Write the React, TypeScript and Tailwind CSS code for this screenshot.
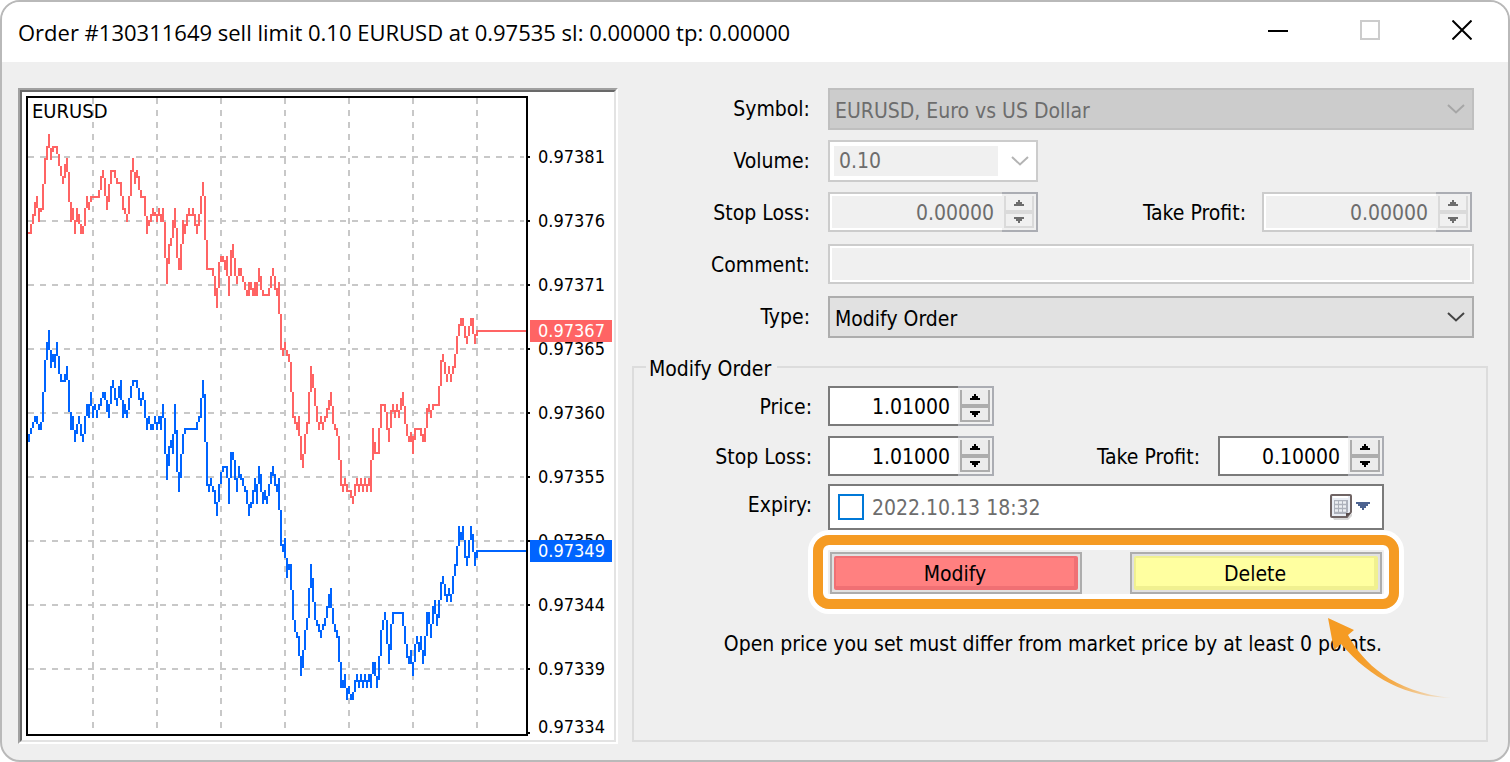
import { useState } from "react";
import type { ReactNode } from "react";
import clsx from "clsx";

// "top-bottom" of each tick column, one column per chart cell (a cell is 2px)
const ASK_COLUMNS = `
116-117 112-117 107-112 101-108 98-104 104-111 104-106 92-105 79-92 73-80
67-74 74-80 73-76 73-74 73-77 77-83 83-88 88-92 82-89 79-86
86-101 101-111 104-110 110-117 104-111 107-112 112-117 113-117 104-113 98-104
101-105 98-101 98-99 98-99 98-99 95-99 88-95 85-89 89-98 98-105
92-101 85-92 85-86 85-89 89-92 91-92 91-98 98-105 104-107 107-111
98-107 85-98 79-86 86-92 85-89 88-95 95-99 98-99 98-108 108-117
110-113 107-111 104-108 106-108 107-111 104-108 107-111 104-111 111-129 129-142
122-132 119-123 110-119 104-114 114-129 129-135 122-135 110-122 112-117 107-113
104-108 107-108 104-108 107-113 112-117 107-113 98-107 91-98 98-120 120-135
134-135 134-135 134-138 138-148 144-154 131-144 128-131 128-131 130-135 128-138
138-148 125-138 122-129 129-138 138-142 134-138 134-138 138-141 141-145 145-148
141-148 141-145 144-148 141-148 141-148 134-141 138-145 145-148 147-148 147-148
144-148 138-144 134-138 138-145 144-148 141-157 157-175 174-178 171-175 175-178
177-181 181-196 196-209 208-212 211-215 208-218 218-230 227-234 217-227 211-217
196-212 183-196 187-194 194-203 203-211 211-215 208-212 211-215 208-211 204-209
200-205 196-203 203-212 212-215 214-218 218-230 230-243 242-246 239-243 242-246
245-246 245-249 248-252 242-248 239-243 242-246 239-243 242-246 239-243 242-246
239-243 230-246 214-230 221-227 226-227 214-227 202-214 202-203 202-206 206-215
214-221 205-214 202-206 205-209 202-206 205-209 199-205 196-203 203-212 212-218
218-221 216-221 218-227 214-220 214-215 214-215 214-218 217-221 214-221 204-214
202-206 205-209 202-205 202-203 202-203 193-203 180-193 177-181 181-187 187-191
183-187 187-191 183-187 177-184 168-177 162-168 159-163 159-163 163-169 168-172
163-168 159-163 159-167 167-172 165-168`;

const BID_COLUMNS = `
217-221 214-217 211-214 208-211 208-212 212-215 211-215 196-211 180-196 171-180
165-175 175-184 177-181 177-184 171-178 178-187 187-191 190-191 187-191 183-190
190-206 206-215 208-215 215-221 212-217 208-212 212-218 217-221 208-217 202-208
202-209 196-203 203-209 202-205 205-209 202-205 199-203 196-199 196-200 200-206
202-209 193-202 190-194 194-200 199-203 193-199 190-200 200-209 202-207 205-209
199-205 193-199 190-193 190-191 190-194 194-200 199-203 196-200 200-209 209-215
208-212 212-215 212-215 208-212 211-215 208-212 208-215 202-209 209-227 227-240
223-233 220-224 217-227 202-217 215-236 236-246 227-239 217-227 214-217 214-215
214-215 214-215 214-215 214-215 211-215 208-211 199-209 190-199 197-221 221-243
242-246 239-243 243-246 245-252 251-258 242-251 236-242 233-236 233-234 233-239
239-252 226-239 226-230 230-240 239-246 233-239 237-240 239-243 243-246 245-252
252-258 251-254 245-252 239-246 242-252 233-242 237-246 246-252 245-250 248-252
242-248 236-242 233-238 237-243 242-246 239-255 255-273 272-276 269-279 279-289
282-285 282-295 295-310 310-316 316-319 318-328 328-338 325-334 315-325 309-315
294-309 282-294 289-301 301-310 310-313 312-316 315-319 312-315 309-313 303-309
297-304 294-304 304-312 312-316 315-319 318-331 331-344 340-344 337-344 344-350
343-347 347-350 346-350 340-346 337-341 340-344 337-341 340-344 337-341 340-344
337-341 337-344 331-337 331-338 338-344 328-340 315-328 310-315 306-310 310-322
322-332 312-325 306-312 306-307 306-307 306-307 306-307 306-313 313-322 322-329
328-332 325-332 331-338 322-331 318-322 321-326 318-325 325-332 318-328 306-318
306-312 312-319 303-312 300-307 307-313 300-309 291-300 288-292 292-298 297-301
294-298 297-301 288-297 282-288 273-283 263-273 266-270 263-270 270-279 278-283
270-279 263-270 267-276 276-283 275-279`;

const toPath = (columns: string) =>
  columns
    .trim()
    .split(/\s+/)
    .map((column, i) => {
      const [top, bottom] = column.split("-");
      return `M${14 + i} ${top}h1V${bottom}h-1z`;
    })
    .join("");

const askPath = toPath(ASK_COLUMNS);
const bidPath = toPath(BID_COLUMNS);

const verticalLines = [93, 157, 221, 285, 349, 413, 477];

const priceLevels = [
  { y: 157, label: "0.97381" },
  { y: 221, label: "0.97376" },
  { y: 285, label: "0.97371" },
  { y: 349, label: "0.97365" },
  { y: 413, label: "0.97360" },
  { y: 477, label: "0.97355" },
  { y: 541, label: "0.97350" },
  { y: 605, label: "0.97344" },
  { y: 669, label: "0.97339" },
];

const TickChart = () => (
  <div className="shrink-0 self-start border-2 border-t-[#a0a0a0] border-l-[#a0a0a0] border-r-white border-b-white">
    <div className="border-2 border-t-[#696969] border-l-[#696969] border-r-[#e3e3e3] border-b-[#e3e3e3] bg-white">
      <svg
        width="592"
        height="648"
        viewBox="22 92 592 648"
        role="img"
        aria-label="EURUSD tick chart"
        className="block text-[18px]"
      >
        <g
          shapeRendering="crispEdges"
          stroke="#c8c8c8"
          strokeWidth="2"
          strokeDasharray="6 6"
        >
          {verticalLines.map((x) => (
            <path key={x} d={`M${x} 98V728`} />
          ))}
          {priceLevels.map(({ y }) => (
            <path key={y} d={`M28 ${y}H524`} />
          ))}
        </g>
        <g shapeRendering="crispEdges">
          <path transform="scale(2)" d={askPath} fill="#ff6464" />
          <path transform="scale(2)" d={bidPath} fill="#0064ff" />
          <path d="M476 331H526" stroke="#ff6464" strokeWidth="2" />
          <path d="M476 551H526" stroke="#0064ff" strokeWidth="2" />
          <rect
            x="27"
            y="97"
            width="500"
            height="638"
            fill="none"
            stroke="#000"
            strokeWidth="2"
          />
          {priceLevels.map(({ y }) => (
            <path key={y} d={`M528 ${y}h2`} stroke="#000" strokeWidth="2" />
          ))}
          <path d="M528 733h2" stroke="#000" strokeWidth="2" />
        </g>
        <text x="32" y="118" className="text-[20px]">
          EURUSD
        </text>
        {priceLevels.map(({ y, label }) => (
          <text key={y} x="538" y={y + 6}>
            {label}
          </text>
        ))}
        <text x="538" y="733">
          0.97334
        </text>
        <rect x="530" y="320" width="82" height="22" fill="#ff6464" />
        <text x="538" y="337" fill="#fff">
          0.97367
        </text>
        <rect x="530" y="540" width="82" height="22" fill="#0064ff" />
        <text x="538" y="557" fill="#fff">
          0.97349
        </text>
      </svg>
    </div>
  </div>
);

const Chevron = ({ className }: { className?: string }) => (
  <svg
    width="18"
    height="10"
    viewBox="0 0 18 10"
    fill="none"
    stroke="currentColor"
    strokeWidth="2"
    className={className}
    aria-hidden="true"
  >
    <path d="M1 1l8 7.5L17 1" />
  </svg>
);

const SelectBox = ({
  id,
  options,
  disabled,
}: {
  id: string;
  options: string[];
  disabled?: boolean;
}) => (
  <div className="relative">
    <select
      id={id}
      disabled={disabled}
      className={clsx(
        "block h-[42px] w-full appearance-none border-2 pl-[5px] pr-10 pt-[3px] opacity-100",
        disabled
          ? "border-[#bfbfbf] bg-[#cccccc] text-[#6d6d6d]"
          : "border-[#adadad] bg-[#e1e1e1] text-black"
      )}
    >
      {options.map((option) => (
        <option key={option}>{option}</option>
      ))}
    </select>
    <Chevron
      className={clsx(
        "pointer-events-none absolute right-[9px] top-4",
        disabled ? "text-[#a6a6a6]" : "text-[#444444]"
      )}
    />
  </div>
);

const SpinButton = ({
  direction,
  disabled,
  onClick,
}: {
  direction: "up" | "down";
  disabled?: boolean;
  onClick: () => void;
}) => (
  <button
    type="button"
    aria-label={direction === "up" ? "Increase" : "Decrease"}
    disabled={disabled}
    onClick={onClick}
    className={clsx(
      "flex h-4 items-center justify-center border-2",
      direction === "up" && "border-t-0",
      disabled ? "border-[#dadada] bg-[#f0f0f0]" : "border-[#adadad] bg-[#ececec]"
    )}
  >
    <svg
      width="10"
      height="6"
      viewBox="0 0 10 6"
      fill={disabled ? "#6d6d6d" : "#000"}
      shapeRendering="crispEdges"
    >
      {direction === "up" ? (
        <path d="M4 0h2v2h2v2h2v2H0V4h2V2h2z" />
      ) : (
        <path d="M0 0h10v2H8v2H6v2H4V4H2V2H0z" />
      )}
    </svg>
  </button>
);

const SpinBox = ({
  id,
  initial,
  disabled,
}: {
  id: string;
  initial: string;
  disabled?: boolean;
}) => {
  const [value, setValue] = useState(initial);
  const step = (delta: number) =>
    setValue((Number(value) + delta).toFixed(5));

  return (
    <div className={clsx("flex h-10", disabled ? "w-[210px]" : "w-[166px]")}>
      <div
        className={clsx(
          "min-w-0 flex-1 border-2 border-r-0 bg-white",
          disabled ? "border-[#cccccc] py-[2px] pl-[2px]" : "border-[#7a7a7a]"
        )}
      >
        <input
          id={id}
          type="text"
          value={value}
          disabled={disabled}
          onChange={(e) => setValue(e.target.value)}
          className={clsx(
            "block h-full w-full pr-2 pt-[2px] text-right",
            disabled ? "bg-[#f0f0f0] text-[#6d6d6d]" : "bg-white text-black"
          )}
        />
      </div>
      <div className="flex w-9 flex-col border-2 border-l-0 border-[#abadb3] bg-[#f0f0f0] px-[2px] pt-[2px]">
        <SpinButton
          direction="up"
          disabled={disabled}
          onClick={() => step(0.00001)}
        />
        <SpinButton
          direction="down"
          disabled={disabled}
          onClick={() => step(-0.00001)}
        />
      </div>
    </div>
  );
};

const FieldLabel = ({
  htmlFor,
  children,
}: {
  htmlFor: string;
  children: ReactNode;
}) => (
  <label
    htmlFor={htmlFor}
    className="flex h-[42px] items-center justify-end whitespace-nowrap"
  >
    {children}
  </label>
);

const CalendarIcon = () => (
  <svg width="42" height="28" viewBox="0 0 42 28" aria-hidden="true">
    <path d="M3 25h14l5-5v3l-4 4H4z" fill="#d6d6d6" />
    <path
      d="M1 3a1 1 0 0 1 1-1h18a1 1 0 0 1 1 1v16l-4 5H2a1 1 0 0 1-1-1z"
      fill="#e9edf4"
      stroke="#6f6464"
      strokeWidth="2"
    />
    <path d="M3 3h15v2H3z" fill="#fff" />
    <path d="M4 7h14v12l-2 2H4z" fill="#adb1bb" />
    <path
      d="M5 9.500h3M9 9.500h3M13 9.500h3M5 13.500h3M9 13.500h3M13 13.500h3M5 17.500h3M9 17.500h3M13 17.500h3"
      stroke="#eceef2"
      strokeWidth="2.500"
    />
    <path d="M16 24v-4h5z" fill="#584c4c" />
    <path
      d="M26 9h14v2h-2v2h-2v2h-2v2h-2v-2h-2v-2h-2v-2h-2z"
      fill="#4d6390"
      shapeRendering="crispEdges"
    />
  </svg>
);

const TitleBar = () => (
  <header className="flex h-[60px] items-center bg-white pl-4">
    <h1 className="flex-1 truncate font-['Open_Sans',sans-serif] text-[22px]">
      Order #130311649 sell limit 0.10 EURUSD at 0.97535 sl: 0.00000 tp: 0.00000
    </h1>
    <button
      type="button"
      aria-label="Minimize"
      className="flex h-full w-[92px] items-center justify-center"
    >
      <svg width="20" height="20" viewBox="0 0 20 20" stroke="#000">
        <path d="M0 9h20" strokeWidth="2" />
      </svg>
    </button>
    <button
      type="button"
      aria-label="Maximize"
      disabled
      className="flex h-full w-[92px] items-center justify-center pb-[4px]"
    >
      <svg width="20" height="20" viewBox="0 0 20 20" fill="none">
        <path d="M1 1h18v18H1z" stroke="#cccccc" strokeWidth="2" />
      </svg>
    </button>
    <button
      type="button"
      aria-label="Close"
      className="flex h-full w-[92px] items-center justify-center pb-[4px]"
    >
      <svg width="20" height="20" viewBox="0 0 20 20" stroke="#000">
        <path d="M.5 .5l19 19M19.500 .5L.5 19.500" strokeWidth="2" />
      </svg>
    </button>
  </header>
);

const OrderFields = () => (
  <div className="grid grid-cols-[178px_1fr] gap-x-[18px] gap-y-[10px] pr-[14px]">
    <FieldLabel htmlFor="symbol">Symbol:</FieldLabel>
    <SelectBox id="symbol" options={["EURUSD, Euro vs US Dollar"]} disabled />

    <FieldLabel htmlFor="volume">Volume:</FieldLabel>
    <div className="flex h-[42px] w-[210px] items-center border-2 border-[#cccccc] bg-white p-1">
      <input
        id="volume"
        type="text"
        defaultValue="0.10"
        disabled
        className="h-full w-[164px] bg-[#f0f0f0] pl-[5px] text-[#6d6d6d]"
      />
      <button
        type="button"
        aria-label="Volume list"
        disabled
        className="flex flex-1 justify-end pr-[3px]"
      >
        <Chevron className="text-[#b4b4b4]" />
      </button>
    </div>

    <FieldLabel htmlFor="stop-loss">Stop Loss:</FieldLabel>
    <div className="flex h-[42px] justify-between pr-[2px]">
      <SpinBox id="stop-loss" initial="0.00000" disabled />
      <div className="flex gap-4">
        <FieldLabel htmlFor="take-profit">Take Profit:</FieldLabel>
        <SpinBox id="take-profit" initial="0.00000" disabled />
      </div>
    </div>

    <FieldLabel htmlFor="comment">Comment:</FieldLabel>
    <div className="h-[42px]">
      <div className="h-10 border-2 border-[#cccccc] bg-white p-[2px]">
        <input
          id="comment"
          type="text"
          disabled
          className="block h-full w-full bg-[#f0f0f0] px-1"
        />
      </div>
    </div>

    <FieldLabel htmlFor="type">Type:</FieldLabel>
    <SelectBox id="type" options={["Modify Order"]} />
  </div>
);

const Pointer = () => (
  <svg
    width="130"
    height="104"
    viewBox="0 0 130 104"
    className="pointer-events-none absolute -right-[68px] top-full"
    aria-hidden="true"
  >
    <defs>
      <linearGradient
        id="pointer-fade"
        gradientUnits="userSpaceOnUse"
        x1="30"
        y1="55"
        x2="122"
        y2="98"
      >
        <stop offset="0" stopColor="#f59b23" />
        <stop offset="0.45" stopColor="#f59b23" stopOpacity="0.8" />
        <stop offset="1" stopColor="#f59b23" stopOpacity="0.1" />
      </linearGradient>
    </defs>
    <path
      d="M1 19L27 31L21 36C36 64 66 93 124 99C80 98 44 80 14 45L7 51Z"
      fill="url(#pointer-fade)"
    />
  </svg>
);

const ModifyOrder = () => (
  <fieldset className="mt-[15px] flex-1 border-2 border-[#dcdcdc] pl-3 pr-[102px]">
    <legend className="h-7 pl-[3px] pr-[6px] leading-8">Modify Order</legend>
    <div className="grid grid-cols-[166px_1fr] gap-x-4 pt-[5px]">
      <FieldLabel htmlFor="modify-price">Price:</FieldLabel>
      <div className="pb-[10px]">
        <SpinBox id="modify-price" initial="1.01000" />
      </div>

      <FieldLabel htmlFor="modify-stop-loss">Stop Loss:</FieldLabel>
      <div className="flex h-12 justify-between">
        <SpinBox id="modify-stop-loss" initial="1.01000" />
        <div className="flex gap-[18px]">
          <FieldLabel htmlFor="modify-take-profit">Take Profit:</FieldLabel>
          <SpinBox id="modify-take-profit" initial="0.10000" />
        </div>
      </div>

      <FieldLabel htmlFor="expiry">Expiry:</FieldLabel>
      <div className="flex h-[46px] items-center gap-2 border-2 border-[#7a7a7a] bg-white pl-2 pr-[10px]">
        <input
          type="checkbox"
          aria-label="Use expiry"
          className="size-[26px] shrink-0 appearance-none border-2 border-[#0078d7] bg-white checked:bg-[#0078d7]"
        />
        <input
          id="expiry"
          type="text"
          defaultValue="2022.10.13 18:32"
          className="min-w-0 flex-1 pt-[2px] text-[#6d6d6d]"
        />
        <button type="button" aria-label="Open calendar">
          <CalendarIcon />
        </button>
      </div>

      <div className="relative col-start-2 -mx-[15px] mt-[5px] flex gap-12 rounded-[16px] border-[10px] border-[#f59b23] px-[7px] pb-[5px] pt-[7px] shadow-[0_0_0_5px_#fff,inset_0_0_0_5px_#fff]">
        <button
          type="button"
          className="h-[42px] flex-1 border-2 border-[#adadad] bg-[#e1e1e1] p-[2px]"
        >
          <span className="flex h-full items-center justify-center rounded-[2px] border-b-4 border-l-2 border-r-4 border-t-2 border-[#f07074] bg-[#ff8080] pt-[3px]">
            Modify
          </span>
        </button>
        <button
          type="button"
          className="h-[42px] flex-1 border-2 border-[#adadad] bg-[#e1e1e1] p-[2px]"
        >
          <span className="flex h-full items-center justify-center rounded-[2px] border-b-4 border-l-2 border-r-4 border-t-2 border-[#f0f090] bg-[#ffffa0] pt-[3px]">
            Delete
          </span>
        </button>
        <Pointer />
      </div>
    </div>
    <p className="mt-[21px] whitespace-nowrap pr-[2px] text-right leading-7">
      Open price you set must differ from market price by at least 0 points.
    </p>
  </fieldset>
);

export default function App() {
  return (
    <div className="flex min-h-screen flex-col overflow-hidden rounded-[20px] border-2 border-[#b9b9b9] bg-[#efefef] font-['DejaVu_Sans_Condensed','Noto_Sans',sans-serif] text-[21px] leading-7 text-black">
      <TitleBar />
      <main className="flex flex-1 gap-[14px] pb-4 pl-4 pr-5 pt-[26px]">
        <TickChart />
        <form
          className="flex min-w-0 flex-1 flex-col pb-[2px]"
          onSubmit={(e) => e.preventDefault()}
        >
          <OrderFields />
          <ModifyOrder />
        </form>
      </main>
    </div>
  );
}
